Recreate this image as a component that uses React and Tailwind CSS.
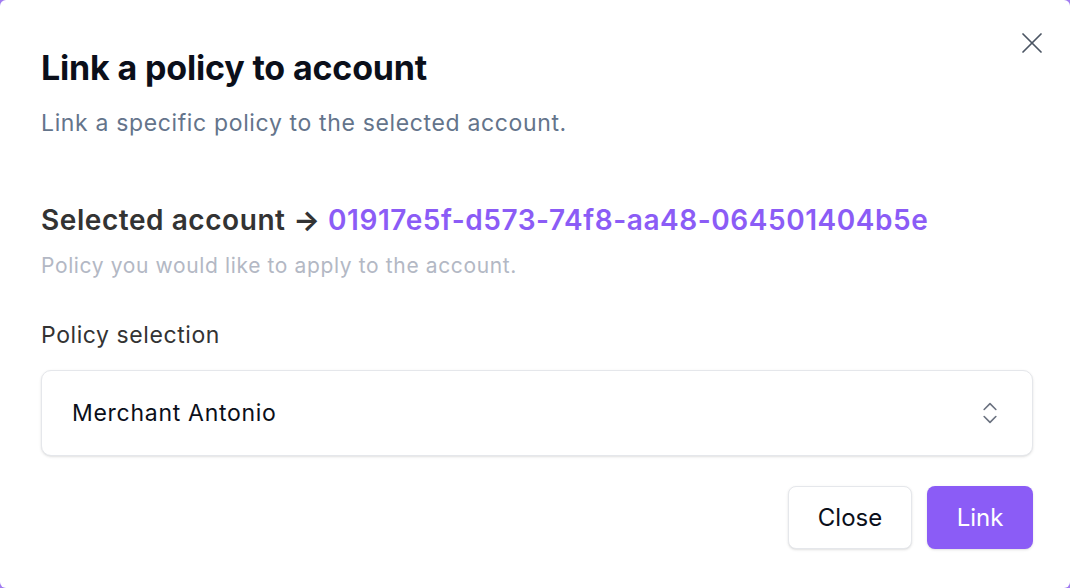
import React from "react";
import { X, ChevronsUpDown } from "lucide-react";

const LinkPolicyDialog = () => {
  return (
    <div className="h-screen w-full bg-[#a17cf0] font-['Inter',sans-serif]">
      <div className="relative h-full w-full rounded-md bg-white px-[41px] pt-[48px]">
        {/* Close icon */}
        <button className="absolute right-[20px] top-[25px] text-[#4b5563]">
          <X size={36} strokeWidth={1.15} />
        </button>

        {/* Header */}
        <h2 className="text-[34px] leading-[40px] font-bold tracking-[-0.005em] text-[#0b0f1a]">
          Link a policy to account
        </h2>
        <p className="mt-[19px] text-[23px] leading-[32px] tracking-[0.028em] text-[#64748b]">
          Link a specific policy to the selected account.
        </p>

        {/* Selected account */}
        <h3 className="mt-[63px] text-[28px] leading-[36px] font-semibold tracking-[0.02em] text-[#333333]">
          Selected account{" "}
          <span className="font-bold">→</span>{" "}
          <span className="text-[#8b5cf6]">01917e5f-d573-74f8-aa48-064501404b5e</span>
        </h3>
        <p className="mt-[14px] text-[21px] leading-[28px] tracking-[0.03em] text-[#b3b8c4]">
          Policy you would like to apply to the account.
        </p>

        {/* Policy select */}
        <label className="mt-[39px] block text-[23px] leading-[32px] tracking-[0.025em] text-[#333333]">
          Policy selection
        </label>
        <div className="mt-[19px] flex h-[86px] w-[992px] items-center justify-between rounded-[10px] border border-[#e5e7eb] bg-white pl-[30px] pr-[28px] shadow-sm">
          <span className="text-[23px] tracking-[0.031em] text-[#0b0f1a]">Merchant Antonio</span>
          <ChevronsUpDown size={28} strokeWidth={1.4} className="text-[#6b7280]" />
        </div>

        {/* Actions */}
        <div className="mt-[30px] flex w-[992px] justify-end gap-[15px]">
          <button className="h-[63px] w-[124px] rounded-lg border border-[#e5e7eb] bg-white text-[24px] text-[#0b0f1a] shadow-sm">
            Close
          </button>
          <button className="h-[63px] w-[106px] rounded-lg bg-[#8b5cf6] text-[24px] text-white shadow-sm">
            Link
          </button>
        </div>
      </div>
    </div>
  );
};

export default function App() {
  return <LinkPolicyDialog />;
}
